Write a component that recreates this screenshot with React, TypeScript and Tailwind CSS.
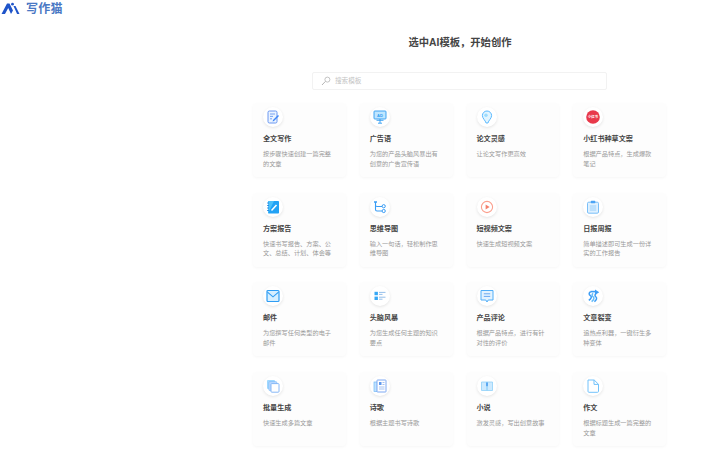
import React from "react";

// template icons, all on a 14x14 box
const icons: Record<string, React.ReactNode> = {
  write: (
    <>
      <rect x="2" y="1" width="9" height="12" rx="1.4" fill="#eaf3ff" stroke="#5b8def" strokeWidth="0.9" />
      <path d="M4 4h5M4 6.4h3M4 8.8h2" stroke="#5b8def" strokeWidth="0.8" />
      <path d="M7 10l5-5 1 1-5 5-1.4.4z" fill="#3f86f5" />
    </>
  ),
  ad: (
    <>
      <rect x="1" y="1" width="12" height="8" rx="0.8" fill="#bfe6ff" stroke="#2f9bf0" strokeWidth="0.9" />
      <text x="7" y="6.8" fontSize="4" fontWeight="700" textAnchor="middle" fill="#2f9bf0">AD</text>
      <path d="M3.5 10.3h7M7 9v4M5 13.2h4" stroke="#2f9bf0" strokeWidth="0.9" />
    </>
  ),
  bulb: (
    <>
      <path d="M7 1a4.6 4.6 0 0 1 4.6 4.6c0 2.8-3 4.8-3.7 7.4H6.1C5.4 10.4 2.4 8.4 2.4 5.6A4.6 4.6 0 0 1 7 1z" fill="#e2f5ff" stroke="#59b9ff" strokeWidth="1" />
      <circle cx="6" cy="5.2" r="1.7" fill="#9bdcff" />
    </>
  ),
  xhs: (
    <>
      <circle cx="7" cy="7" r="6.8" fill="#e8394a" />
      <text x="7" y="8.3" fontSize="3.4" fontWeight="700" textAnchor="middle" fill="#fff" fontFamily="'Noto Sans CJK SC', sans-serif">小红书</text>
    </>
  ),
  plan: (
    <>
      <rect x="2" y="1" width="11" height="12.5" rx="0.8" fill="#22a2f5" />
      <path d="M2 1h6L2 13.5z" fill="#4cc0fa" />
      <path d="M1 3h2M1 5.5h2M1 8h2M1 10.5h2" stroke="#1c7fe0" strokeWidth="0.8" />
      <path d="M5.5 10.5l5-5.5" stroke="#fff" strokeWidth="1.5" />
    </>
  ),
  mind: (
    <>
      <path d="M2.5 2v7.5q0 1.5 1.5 1.5h5M2.5 5q0 1.5 1.5 1.5h5" fill="none" stroke="#3a9df5" strokeWidth="1.1" />
      <path d="M1 2h3" stroke="#3a9df5" strokeWidth="1.5" />
      <circle cx="10.7" cy="6.2" r="1.6" fill="#fff" stroke="#3a9df5" strokeWidth="1" />
      <circle cx="10.7" cy="11" r="1.6" fill="#fff" stroke="#3a9df5" strokeWidth="1" />
    </>
  ),
  video: (
    <>
      <circle cx="7" cy="7" r="5.6" fill="#fff" stroke="#fb9f8d" strokeWidth="1.1" />
      <path d="M5.6 4.6L9.6 7l-4 2.4z" fill="#f47f6b" />
    </>
  ),
  daily: (
    <>
      <rect x="1.5" y="2.2" width="11" height="11" rx="1.2" fill="#dff1ff" stroke="#6cb8f7" strokeWidth="0.9" />
      <rect x="4.8" y="0.8" width="4.5" height="2.4" rx="0.6" fill="#4aa3f5" />
      <path d="M3.8 6h6.4M3.8 8h6.4M3.8 10h6.4" stroke="#85c6f8" strokeWidth="0.8" />
    </>
  ),
  mail: (
    <>
      <rect x="1" y="1.5" width="12" height="11" rx="1" fill="#d6efff" stroke="#2f9df4" strokeWidth="1.2" />
      <path d="M1.5 3.2l5.5 4.6 5.5-4.6" fill="none" stroke="#2f9df4" strokeWidth="1.1" />
    </>
  ),
  brain: (
    <>
      <rect x="1.5" y="2.8" width="3.4" height="3.4" fill="#35a7f5" />
      <rect x="1.5" y="7.6" width="3.4" height="3.4" fill="#35a7f5" />
      <path d="M6 3.4h6.5M6 5.4h3.5M6 8.2h6.5M6 10.2h3.5" stroke="#8ab8e8" strokeWidth="0.9" />
    </>
  ),
  comment: (
    <>
      <path d="M1 1.5h12v9.5H8.2L7 13 5.8 11H1z" fill="#e3f3ff" stroke="#51aef8" strokeWidth="1" />
      <path d="M3.8 4.8h6.4M3.8 7.4h6.4" stroke="#5a9ff0" strokeWidth="0.9" />
    </>
  ),
  fission: (
    <>
      <path d="M4.5 2.6h4.6" stroke="#3d9df5" strokeWidth="1.6" />
      <path d="M4.6 2.6c-2 1.4-1.8 3.2-.2 4s1.2 2.8-1.6 4.8" fill="none" stroke="#3d9df5" strokeWidth="1.5" />
      <path d="M7.2 4.4c-1.6 1-1.4 2.6 0 3.4s.8 3-1.6 4.8" fill="none" stroke="#64bdfa" strokeWidth="1.5" />
      <path d="M10 4.6c-1.4 1-1.2 2.6 0 3.4s.6 2.8-1.6 4.6" fill="none" stroke="#3d9df5" strokeWidth="1.5" />
      <path d="M9 .6l4.2 2.6L9 6z" fill="#3d9df5" />
    </>
  ),
  batch: (
    <>
      <rect x="1" y="1" width="8" height="9" rx="1" fill="#9fd8ff" />
      <rect x="2.8" y="2.6" width="8" height="9" rx="1" fill="#b9d8ff" stroke="#7ab8f7" strokeWidth="0.6" />
      <rect x="5" y="4.6" width="8" height="8.6" rx="0.8" fill="#fff" stroke="#7ab0f5" strokeWidth="0.9" />
    </>
  ),
  poem: (
    <>
      <rect x="1" y="3" width="5" height="9.5" fill="#bfe3ff" stroke="#74b8f5" strokeWidth="0.7" />
      <rect x="4" y="1" width="9" height="12" rx="0.6" fill="#fff" stroke="#6f9ff0" strokeWidth="0.9" />
      <rect x="6" y="3" width="2.5" height="3" fill="#5f98ee" />
      <path d="M9.5 3.5h2M9.5 5.5h2M6 8h5.5M6 10h5.5" stroke="#7ea9ee" strokeWidth="0.7" />
    </>
  ),
  novel: (
    <>
      <path d="M1.5 3h5.5v8.5H1.5zM7 3h5.5v8.5H7z" fill="#cdeaff" stroke="#8fd0f9" strokeWidth="0.8" />
      <path d="M6 3.5h2v4L7 6.8 6 7.5z" fill="#5ba8f2" />
    </>
  ),
  essay: (
    <path d="M2 1h6.2L12.5 5.3v7a1 1 0 0 1-1 1H3a1 1 0 0 1-1-1z M8 1v4.4h4.5" fill="#fff" stroke="#72c2fb" strokeWidth="1" />
  ),
};

const templates = [
  { icon: "write", title: "全文写作", desc: "按步骤快速创建一篇完整的文章" },
  { icon: "ad", title: "广告语", desc: "为您的产品头脑风暴出有创意的广告宣传语" },
  { icon: "bulb", title: "论文灵感", desc: "让论文写作更高效" },
  { icon: "xhs", title: "小红书种草文案", desc: "根据产品特点，生成爆款笔记" },
  { icon: "plan", title: "方案报告", desc: "快速书写报告、方案、公文、总结、计划、体会等" },
  { icon: "mind", title: "思维导图", desc: "输入一句话，轻松制作思维导图" },
  { icon: "video", title: "短视频文案", desc: "快速生成短视频文案" },
  { icon: "daily", title: "日报周报", desc: "简单描述即可生成一份详实的工作报告" },
  { icon: "mail", title: "邮件", desc: "为您撰写任何类型的电子邮件" },
  { icon: "brain", title: "头脑风暴", desc: "为您生成任何主题的知识要点" },
  { icon: "comment", title: "产品评论", desc: "根据产品特点，进行有针对性的评价" },
  { icon: "fission", title: "文章裂变", desc: "追热点利器，一键衍生多种变体" },
  { icon: "batch", title: "批量生成", desc: "快速生成多篇文章" },
  { icon: "poem", title: "诗歌", desc: "根据主题书写诗歌" },
  { icon: "novel", title: "小说", desc: "激发灵感，写出创意故事" },
  { icon: "essay", title: "作文", desc: "根据标题生成一篇完整的文章" },
];

function TemplateCard({ icon, title, desc }: { icon: string; title: string; desc: string }) {
  return (
    <div className="h-[74px] rounded-[4px] bg-[#fdfdfd] pl-[10px] pr-[12px] pt-[4px] shadow-[0_1px_3px_rgba(0,0,0,0.04)]">
      <div className="flex h-[20px] w-[20px] items-center justify-center rounded-full bg-white shadow-[0_1px_3px_rgba(0,0,0,0.1)]">
        <svg width="14" height="14" viewBox="0 0 14 14">
          {icons[icon]}
        </svg>
      </div>
      <div className="mt-[7px] whitespace-nowrap text-[7.1px] font-bold leading-[10px] text-[#444]">{title}</div>
      <div className="mt-[5px] text-[6.2px] leading-[9.5px] text-[#999]">{desc}</div>
    </div>
  );
}

export default function App() {
  return (
    <div className="h-[450px] w-[720px] overflow-hidden bg-white font-['Liberation_Sans','Noto_Sans_CJK_SC',sans-serif]">
      <header className="flex h-[16px] items-center gap-[6px] pl-[1px]">
        <svg width="19" height="13" viewBox="0 0 19 13">
          <path d="M0.5 12L6 1.5h2.5L12 8.5 10 12 7.2 6 4 12z" fill="#1f54c9" />
          <path d="M12.5 4l2 0L18.5 12h-2.4z" fill="#1f54c9" />
          <circle cx="11.5" cy="2.2" r="1.4" fill="#1f54c9" />
        </svg>
        <span className="font-['Noto_Sans_CJK_SC',serif] text-[12px] font-bold leading-none tracking-[0.3px] text-[#4a78c4]">
          写作猫
        </span>
      </header>

      <main className="ml-[253px] w-[413px]">
        <h1 className="mt-[20px] pl-[1px] text-center text-[10.3px] font-bold leading-[14px] text-[#444]">
          选中AI模板，开始创作
        </h1>
        <div className="mt-[22px] ml-[59px] flex h-[18px] w-[295px] items-center gap-[4px] rounded-[2px] border border-[#f2f2f2] pl-[8px]">
          <svg width="10" height="10" viewBox="0 0 10 10">
            <circle cx="6.4" cy="3.6" r="2.5" fill="none" stroke="#b5b5b5" strokeWidth="0.8" />
            <path d="M4.4 5.4L1 9" stroke="#b5b5b5" strokeWidth="1" />
          </svg>
          <span className="text-[6.6px] text-[#c4c4c4]">搜索模板</span>
        </div>
        <div className="mt-[13px] grid grid-cols-4 gap-x-[14px] gap-y-[15.7px]">
          {templates.map(t => (
            <TemplateCard key={t.title} {...t} />
          ))}
        </div>
      </main>
    </div>
  );
}
